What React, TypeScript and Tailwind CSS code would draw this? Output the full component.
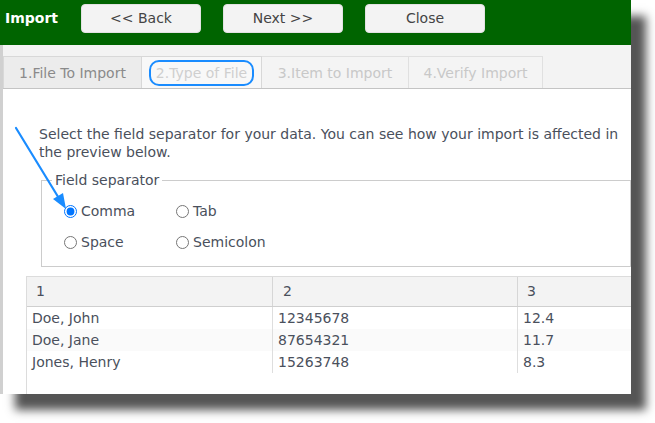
import React from 'react';

const rows = [
    ['Doe, John', '12345678', '12.4'],
    ['Doe, Jane', '87654321', '11.7'],
    ['Jones, Henry', '15263748', '8.3'],
];

function Radio({ label, checked = false }: { label: string; checked?: boolean }) {
    return (
        <label className="flex items-center gap-[4px] h-[31px] text-[14px] text-[#4a505c]">
            <input type="radio" name="sep" defaultChecked={checked} className="w-[13px] h-[13px] m-0 accent-[#0075ff]" />
            <span>{label}</span>
        </label>
    );
}

export default function App() {
    return (
        <div className="w-[655px] h-[423px] bg-white overflow-hidden" style={{ fontFamily: "'DejaVu Sans', Verdana, sans-serif" }}>
            <div className="relative w-[631px] h-[394px] flex flex-col bg-white shadow-[15px_16px_9px_#555]">
                {/* header */}
                <div className="h-[45px] shrink-0 bg-[#006400] flex items-start pt-[4px] pl-[5px]">
                    <div className="w-[76px] h-[29px] flex items-center text-white font-bold text-[14px]">Import</div>
                    <div className="flex gap-[22px]">
                        {['<< Back', 'Next >>', 'Close'].map((b) => (
                            <button key={b} className="w-[120px] h-[29px] rounded-[4px] bg-[#f3f3f3] border border-[#e2e2e2] text-[14px] text-[#444]">
                                {b}
                            </button>
                        ))}
                    </div>
                </div>

                <div className="flex-1 flex flex-col border-l-[3px] border-[#d0d0d0]">
                    {/* tabs */}
                    <div className="h-[44px] shrink-0 bg-[#f3f3f3] border-b border-[#c4c4c4] flex items-end">
                        <div className="w-[139px] h-[32px] pt-px flex items-center justify-center bg-[#ececec] border border-b-0 border-[#d8d8d8] text-[14px] text-[#8a8a8a]">
                            1.File To Import
                        </div>
                        <div className="w-[120px] h-[32px] pt-px flex items-center justify-center bg-[#f8f8f8] border-t border-r border-[#d8d8d8]">
                            <span className="h-[26px] px-[5px] flex items-center rounded-[10px] border-2 border-[#1a8cff] text-[14px] text-[#cfcfcf]">
                                2.Type of File
                            </span>
                        </div>
                        <div className="w-[147px] h-[32px] pt-px flex items-center justify-center bg-[#f4f4f4] border-t border-r border-[#e0e0e0] text-[14px] text-[#c8c8c8]">
                            3.Item to Import
                        </div>
                        <div className="w-[134px] h-[32px] pt-px flex items-center justify-center bg-[#f4f4f4] border-t border-r border-[#e0e0e0] text-[14px] text-[#c8c8c8]">
                            4.Verify Import
                        </div>
                    </div>

                    {/* content */}
                    <div className="flex-1 flex flex-col pt-[36px]">
                        <p className="pl-[36px] text-[14px] leading-[18px] text-[#4a505c]">
                            Select the field separator for your data. You can see how your import is affected in
                            <br />
                            the preview below.
                        </p>

                        <fieldset className="ml-[38px] mt-[10px] h-[96px] border border-[#cccccc] pt-[7px]">
                            <legend className="ml-[10px] px-[3px] text-[14px] leading-[18px] text-[#4a505c]">Field separator</legend>
                            <div className="pl-[22px] grid grid-cols-[112px_auto]">
                                <Radio label="Comma" checked />
                                <Radio label="Tab" />
                                <Radio label="Space" />
                                <Radio label="Semicolon" />
                            </div>
                        </fieldset>

                        {/* preview table */}
                        <div className="ml-[23px] mt-[9px] flex-1 border-l border-t border-[#dcdcdc] text-[14px] text-[#4a505c]">
                            <div className="h-[30px] grid grid-cols-[246px_245px_1fr] bg-[#f3f3f3] border-b border-[#cfcfcf]">
                                <div className="pl-[9px] flex items-center border-r border-[#d6d6d6]">1</div>
                                <div className="pl-[10px] flex items-center border-r border-[#d6d6d6]">2</div>
                                <div className="pl-[9px] flex items-center">3</div>
                            </div>
                            {rows.map((r, i) => (
                                <div key={i} className={`h-[22px] grid grid-cols-[246px_245px_1fr] ${i === 1 ? 'bg-[#fafafa]' : 'bg-white'}`}>
                                    <div className="pl-[5px] flex items-center border-r border-[#dedede]">{r[0]}</div>
                                    <div className="pl-[5px] flex items-center border-r border-[#dedede]">{r[1]}</div>
                                    <div className="pl-[5px] flex items-center">{r[2]}</div>
                                </div>
                            ))}
                        </div>
                    </div>
                </div>

                {/* annotation arrow */}
                <svg className="absolute left-0 top-0 pointer-events-none" width="100" height="230" viewBox="0 0 100 230">
                    <line x1="16" y1="128" x2="60" y2="200" stroke="#1a8cff" strokeWidth="2.2" strokeLinecap="round" />
                    <polygon points="66,209 53,199 63,193" fill="#1a8cff" />
                </svg>
            </div>
        </div>
    );
}
